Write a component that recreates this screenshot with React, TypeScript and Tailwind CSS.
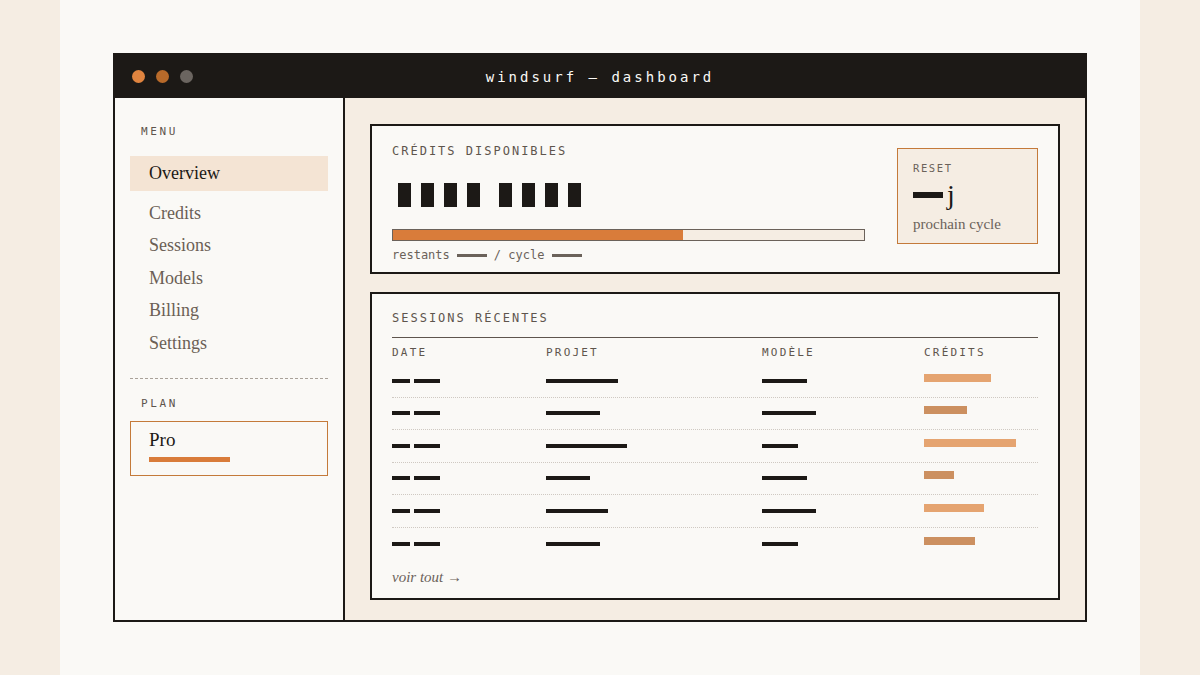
import React from "react"

const mono = "font-['DejaVu_Sans_Mono',monospace]"
const serif = "font-['Liberation_Serif',serif]"

const navItems = ["Credits", "Sessions", "Models", "Billing", "Settings"]

interface SessionRow {
  projet: number
  modele: number
  credits: number
}

const rows: SessionRow[] = [
  { projet: 72, modele: 45, credits: 67 },
  { projet: 54, modele: 54, credits: 43 },
  { projet: 81, modele: 36, credits: 92 },
  { projet: 44, modele: 45, credits: 30 },
  { projet: 62, modele: 54, credits: 60 },
  { projet: 54, modele: 36, credits: 51 },
]

function Bar({ width, className = "bg-[#1c1916] h-[4px]" }: { width: number; className?: string }) {
  return <span className={`inline-block ${className}`} style={{ width }} />
}

function Sidebar() {
  return (
    <aside className="w-[230px] shrink-0 border-r-2 border-[#1c1916] bg-[#faf9f6] px-[15px] pt-[28px]">
      <div className={`${mono} pl-[11px] text-[11px] leading-[12px] tracking-[2.6px] text-[#5e554d]`}>MENU</div>
      <nav className={`${serif} mt-[18px] flex flex-col text-[18px]`}>
        <div className="flex h-[35px] items-center bg-[#f4e4d4] pl-[19px] text-[#1c1916]">Overview</div>
        <div className="mt-[6px] flex flex-col">
          {navItems.map((item) => (
            <div key={item} className="flex h-[32.5px] items-center pl-[19px] text-[#6b5f55]">
              {item}
            </div>
          ))}
        </div>
      </nav>
      <div className="mt-[18px] border-t border-dashed border-[#a9a199]" />
      <div className={`${mono} mt-[19px] pl-[11px] text-[11px] leading-[12px] tracking-[2.6px] text-[#5e554d]`}>PLAN</div>
      <div className="mt-[11px] h-[55px] border-[1.5px] border-[#c47a3a] px-[18px] pt-[6px]">
        <div className={`${serif} text-[19px] leading-[24px] text-[#1c1916]`}>Pro</div>
        <div className="mt-[5px] h-[5px] w-[81px] bg-[#d97c3a]" />
      </div>
    </aside>
  )
}

function CreditsCard() {
  const digits = [0, 1, 2, 3]
  return (
    <section className="flex h-[150px] border-2 border-[#1c1916] bg-[#faf9f6] pl-[20px] pr-[20px] pt-[19px]">
      <div className="w-[473px]">
        <div className={`${mono} text-[12px] leading-[12px] tracking-[2px] text-[#5e554d]`}>CRÉDITS DISPONIBLES</div>
        <div className="mt-[26px] flex h-[24px] items-center pl-[6px]">
          <div className="flex gap-[10px]">
            {digits.map((d) => (
              <span key={d} className="h-[24px] w-[13px] bg-[#1c1916]" />
            ))}
          </div>
          <div className="ml-[19px] flex gap-[10px]">
            {digits.map((d) => (
              <span key={d} className="h-[24px] w-[13px] bg-[#1c1916]" />
            ))}
          </div>
        </div>
        <div className="mt-[22px] h-[12px] border border-[#6b625a] bg-[#f5ede3]">
          <div className="h-full w-[61.5%] bg-[#d97c3a]" />
        </div>
        <div className={`${mono} mt-[7px] flex items-center text-[12px] leading-[14px] text-[#6b625a]`}>
          restants
          <Bar width={30} className="mx-[7px] h-[3px] bg-[#6b625a]" />/ cycle
          <Bar width={30} className="ml-[8px] h-[3px] bg-[#6b625a]" />
        </div>
      </div>
      <div className="ml-auto mt-[3px] h-[96px] w-[141px] border-[1.5px] border-[#c47a3a] bg-[#f5ede3] pl-[15px] pt-[13px]">
        <div className={`${mono} text-[10.5px] leading-[12px] tracking-[1.6px] text-[#6b625a]`}>RESET</div>
        <div className={`${serif} mt-[6px] flex items-center text-[28px] leading-[30px] text-[#1c1916]`}>
          <span className="mr-[4px] h-[6px] w-[30px] bg-[#1c1916]" />j
        </div>
        <div className={`${serif} mt-[5px] text-[15px] leading-[18px] text-[#6b625a]`}>prochain cycle</div>
      </div>
    </section>
  )
}

function SessionsCard() {
  const cols = "grid grid-cols-[154px_216px_162px_1fr] items-center"
  return (
    <section className="mt-[18px] flex-1 border-2 border-[#1c1916] bg-[#faf9f6] px-[20px] pt-[18px]">
      <div className={`${mono} text-[12px] leading-[12px] tracking-[2px] text-[#5e554d]`}>SESSIONS RÉCENTES</div>
      <div className="mt-[13px] border-t border-[#5e554d]" />
      <div className={`${cols} ${mono} mt-[9px] text-[11px] leading-[12px] tracking-[2.2px] text-[#5e554d]`}>
        <span>DATE</span>
        <span>PROJET</span>
        <span>MODÈLE</span>
        <span>CRÉDITS</span>
      </div>
      <div className="mt-[6px]">
        {rows.map((r, i) => (
          <div
            key={i}
            className={`${cols} h-[32.5px] ${i < rows.length - 1 ? "border-b border-dotted border-[#cfc9c2]" : ""}`}
          >
            <div className="flex gap-[4px]">
              <Bar width={18} />
              <Bar width={26} />
            </div>
            <div className="flex">
              <Bar width={r.projet} />
            </div>
            <div className="flex">
              <Bar width={r.modele} />
            </div>
            <div className="flex -translate-y-[3px]">
              <Bar width={r.credits} className={`h-[8px] ${i % 2 === 0 ? "bg-[#e5a470]" : "bg-[#cc9060]"}`} />
            </div>
          </div>
        ))}
      </div>
      <div className={`${serif} mt-[6px] text-[15px] italic text-[#6b625a]`}>voir tout →</div>
    </section>
  )
}

export default function App() {
  return (
    <div className="flex h-[675px] w-[1200px] justify-center bg-[#f5ede3]">
      <div className="w-[1080px] bg-[#faf9f6] px-[53px] pt-[53px]">
        <div className="flex h-[569px] flex-col border-2 border-[#1c1916]">
          <header className="relative flex h-[43px] shrink-0 items-center bg-[#1c1916] pl-[17px]">
            <div className="flex gap-[11px]">
              <span className="h-[13px] w-[13px] rounded-full bg-[#e0843f]" />
              <span className="h-[13px] w-[13px] rounded-full bg-[#b86a2a]" />
              <span className="h-[13px] w-[13px] rounded-full bg-[#6b6560]" />
            </div>
            <div
              className={`${mono} absolute inset-x-0 top-[13px] text-center text-[14px] leading-[18px] tracking-[3px] text-[#faf9f6]`}
            >
              windsurf — dashboard
            </div>
          </header>
          <div className="flex min-h-0 flex-1">
            <Sidebar />
            <main className="flex flex-1 flex-col bg-[#f5ede3] px-[25px] pb-[20px] pt-[26px]">
              <CreditsCard />
              <SessionsCard />
            </main>
          </div>
        </div>
      </div>
    </div>
  )
}
